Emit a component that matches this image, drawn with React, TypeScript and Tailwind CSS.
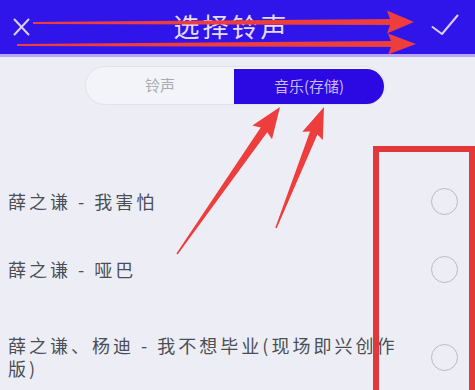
import React from "react";

type Pt = [number, number];

// tapered annotation arrow, tail -> tip
function arrowPoints(
  tail: Pt,
  tip: Pt,
  w0: number,
  w1: number,
  hl: number,
  hw: number
): string {
  const [x1, y1] = tail;
  const [x2, y2] = tip;
  const len = Math.hypot(x2 - x1, y2 - y1);
  const ux = (x2 - x1) / len;
  const uy = (y2 - y1) / len;
  const nx = -uy;
  const ny = ux;
  const bx = x2 - ux * hl;
  const by = y2 - uy * hl;
  const pts: Pt[] = [
    [x1 + (nx * w0) / 2, y1 + (ny * w0) / 2],
    [bx + (nx * w1) / 2, by + (ny * w1) / 2],
    [bx - ux * 3 + (nx * hw) / 2, by - uy * 3 + (ny * hw) / 2],
    [x2, y2],
    [bx - ux * 3 - (nx * hw) / 2, by - uy * 3 - (ny * hw) / 2],
    [bx - (nx * w1) / 2, by - (ny * w1) / 2],
    [x1 - (nx * w0) / 2, y1 - (ny * w0) / 2],
  ];
  return pts.map((p) => `${p[0].toFixed(1)},${p[1].toFixed(1)}`).join(" ");
}

const arrows = [
  { tail: [33, 23] as Pt, tip: [414, 22] as Pt, w0: 2, w1: 6, hl: 24, hw: 23 },
  { tail: [17, 45] as Pt, tip: [416, 44] as Pt, w0: 2, w1: 6, hl: 25, hw: 21 },
  { tail: [177, 254] as Pt, tip: [280, 107] as Pt, w0: 1.5, w1: 8, hl: 28, hw: 24 },
  { tail: [276, 228] as Pt, tip: [324, 107] as Pt, w0: 1.5, w1: 8, hl: 28, hw: 22 },
];

const songs = [
  { title: "薛之谦 - 我害怕", h: "h-[68px]" },
  { title: "薛之谦 - 哑巴", h: "h-[68px]" },
  { title: "薛之谦、杨迪 - 我不想毕业(现场即兴创作版)", h: "h-[108px]" },
];

function Radio() {
  return (
    <div className="w-[27px] h-[27px] rounded-full border-[1.5px] border-[#b9bbc2] shrink-0" />
  );
}

export default function App() {
  return (
    <div
      className="relative w-[475px] h-[390px] overflow-hidden bg-[#edeef5]"
      style={{ fontFamily: '"Noto Sans CJK SC", "Noto Sans", sans-serif' }}
    >
      {/* title bar */}
      <div className="h-[57px] bg-[#3015ea] border-b-[3px] border-[#b8a6f4] flex items-center">
        <div className="w-[42px] flex justify-center pl-[1px]">
          <svg width="17" height="18" viewBox="0 0 17 18" fill="none">
            <path d="M1.5 1.5 15.5 16.5M15.5 1.5 1.5 16.5" stroke="#dcd0fa" strokeWidth="2" strokeLinecap="round" />
          </svg>
        </div>
        <div className="flex-1 text-center text-[26px] leading-none tracking-[3px] text-[#e4dcfd] -mt-[3px] pl-[6px]">
          选择铃声
        </div>
        <div className="w-[60px] flex justify-center -mt-[4px]">
          <svg width="28" height="22" viewBox="0 0 28 22" fill="none">
            <path d="M1.5 13 11 20 26.5 1.5" stroke="#dcd0fa" strokeWidth="2" strokeLinecap="round" strokeLinejoin="round" />
          </svg>
        </div>
      </div>

      {/* segmented tabs */}
      <div className="mt-[9px] ml-[85px] w-[300px] h-[39px] rounded-full bg-[#f3f4f9] border border-[#e2e3ea] flex items-stretch">
        <div className="flex-1 flex items-center justify-center text-[15px] text-[#a9abb2]">
          铃声
        </div>
        <div className="w-[150px] mt-[2px] bg-[#2c08e2] rounded-l-[4px] rounded-r-full flex items-center justify-center text-[15px] text-[#c9bbf2]">
          音乐(存储)
        </div>
      </div>

      {/* song list */}
      <div className="mt-[62px]">
        {songs.map((s) => (
          <div key={s.title} className={`${s.h} flex items-center justify-between pl-[8px] pr-[17px]`}>
            <div className="w-[400px] text-[18px] leading-[23px] tracking-[3px] text-[#4b4e54]">
              {s.title}
            </div>
            <Radio />
          </div>
        ))}
      </div>

      {/* annotation overlay */}
      <div className="absolute left-[373px] top-[146px] w-[102px] h-[270px] border-[6px] border-[#e2383a]" />
      <svg className="absolute inset-0 pointer-events-none" width="475" height="390">
        {arrows.map((a, i) => (
          <polygon
            key={i}
            points={arrowPoints(a.tail, a.tip, a.w0, a.w1, a.hl, a.hw)}
            fill="#ee3d3d"
          />
        ))}
      </svg>
    </div>
  );
}
